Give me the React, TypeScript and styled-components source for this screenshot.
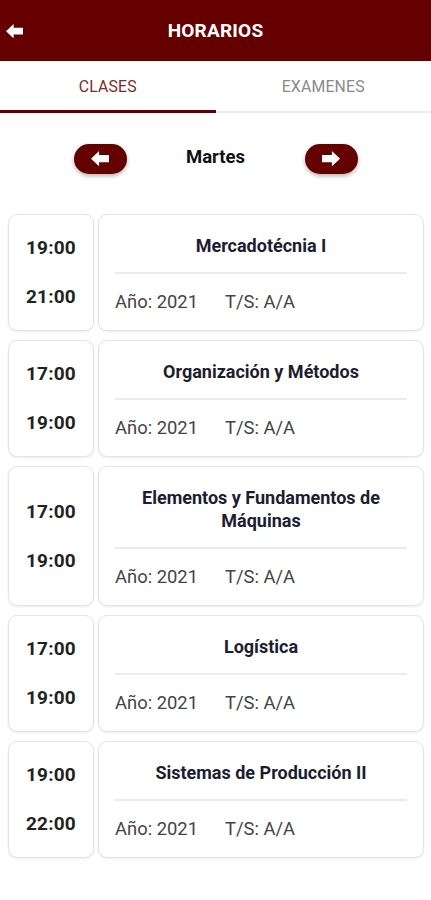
import React from "react";
import styled, { createGlobalStyle } from "styled-components";

const Global = createGlobalStyle`
  html, body { margin: 0; padding: 0; background: #fff; }
  body { font-family: Roboto, "Noto Sans", "Liberation Sans", sans-serif; }
  * { box-sizing: border-box; }
`;

const MAROON = "#640000";

const Page = styled.div`
  width: 431px;
  min-height: 900px;
  background: #fff;
`;

const Header = styled.header`
  height: 61px;
  background: ${MAROON};
  display: grid;
  grid-template-columns: 48px 1fr 48px;
  align-items: center;
`;

const BackBtn = styled.div`
  display: flex;
  align-items: center;
  padding-left: 6px;
  padding-top: 1px;
`;

const Title = styled.h1`
  margin: 0;
  text-align: center;
  color: #fff;
  font-size: 19px;
  font-weight: 700;
  letter-spacing: 0.2px;
`;

const Tabs = styled.div`
  display: flex;
  height: 52px;
  border-bottom: 2px solid #ececec;
`;

const Tab = styled.div<{ $active?: boolean }>`
  flex: 1;
  display: flex;
  align-items: center;
  justify-content: center;
  font-size: 15.8px;
  letter-spacing: 0.2px;
  color: ${(p) => (p.$active ? "#7d2b2b" : "#8a8a8a")};
  border-bottom: 3px solid ${(p) => (p.$active ? MAROON : "transparent")};
  margin-bottom: -2px;
  padding-top: 1px;
`;

const DayNav = styled.div`
  display: flex;
  align-items: center;
  justify-content: center;
  padding: 31px 0 40px;
`;

const NavBtn = styled.div`
  width: 53px;
  height: 30px;
  border-radius: 15px;
  background: ${MAROON};
  display: flex;
  align-items: center;
  justify-content: center;
  box-shadow: 0 2px 4px rgba(0, 0, 0, 0.3);
`;

const DayLabel = styled.div`
  width: 178px;
  text-align: center;
  font-size: 18.5px;
  font-weight: 700;
  color: #111;
  margin-top: -4px;
`;

const List = styled.div`
  display: flex;
  flex-direction: column;
  gap: 9px;
  padding: 0 7px 0 8px;
`;

const Row = styled.div`
  display: flex;
  gap: 4px;
`;

const Card = styled.div`
  background: #fff;
  border: 1px solid #e4e4e4;
  border-radius: 9px;
  box-shadow: 0 1px 2px rgba(0, 0, 0, 0.08);
`;

const TimeCard = styled(Card)`
  width: 86px;
  flex-shrink: 0;
  display: flex;
  flex-direction: column;
  align-items: center;
  justify-content: center;
  gap: 27px;
`;

const Time = styled.div`
  font-size: 19px;
  font-weight: 700;
  color: #222;
  line-height: 22px;
  letter-spacing: 0.2px;
`;

const InfoCard = styled(Card)`
  flex: 1;
  padding: 19px 16px 17px;
`;

const Subject = styled.div`
  text-align: center;
  font-size: 18px;
  font-weight: 700;
  color: #1d1d30;
  line-height: 23px;
  padding: 0 8px;
`;

const Divider = styled.div`
  height: 2px;
  background: #ececec;
  margin: 15px 0 17px;
`;

const Meta = styled.div`
  display: flex;
  gap: 27px;
  font-size: 18.4px;
  color: #444;
  line-height: 22px;
`;

const Arrow = ({ dir, size = 16 }: { dir: "left" | "right"; size?: number }) => (
  <svg
    width={size}
    height={size * 0.85}
    viewBox="0 0 20 17"
    style={{ transform: dir === "right" ? "scaleX(-1)" : undefined }}
  >
    <polygon points="0,8.5 9,0 9,4.5 20,4.5 20,12.5 9,12.5 9,17" fill="#fff" />
  </svg>
);

const classes = [
  { start: "19:00", end: "21:00", name: "Mercadotécnia I" },
  { start: "17:00", end: "19:00", name: "Organización y Métodos" },
  { start: "17:00", end: "19:00", name: "Elementos y Fundamentos de Máquinas" },
  { start: "17:00", end: "19:00", name: "Logística" },
  { start: "19:00", end: "22:00", name: "Sistemas de Producción II" },
];

export default function App() {
  return (
    <Page>
      <Global />
      <Header>
        <BackBtn>
          <Arrow dir="left" size={17} />
        </BackBtn>
        <Title>HORARIOS</Title>
        <div />
      </Header>
      <Tabs>
        <Tab $active>CLASES</Tab>
        <Tab>EXAMENES</Tab>
      </Tabs>
      <DayNav>
        <NavBtn>
          <Arrow dir="left" size={18} />
        </NavBtn>
        <DayLabel>Martes</DayLabel>
        <NavBtn>
          <Arrow dir="right" size={18} />
        </NavBtn>
      </DayNav>
      <List>
        {classes.map((c, i) => (
          <Row key={i}>
            <TimeCard>
              <Time>{c.start}</Time>
              <Time>{c.end}</Time>
            </TimeCard>
            <InfoCard>
              <Subject>{c.name}</Subject>
              <Divider />
              <Meta>
                <span>Año: 2021</span>
                <span>T/S: A/A</span>
              </Meta>
            </InfoCard>
          </Row>
        ))}
      </List>
    </Page>
  );
}
